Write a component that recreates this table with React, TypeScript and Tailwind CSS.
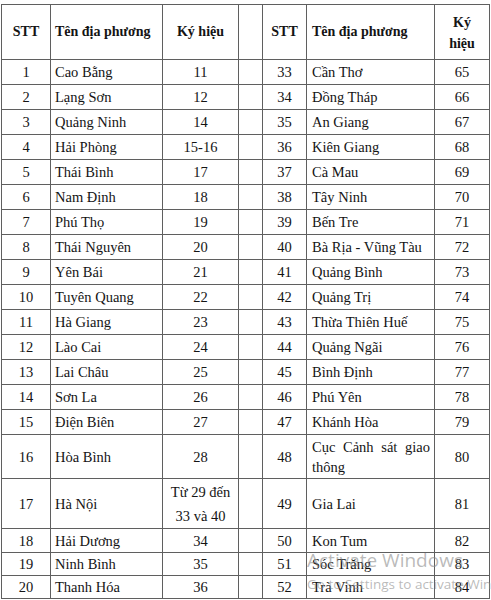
import React from 'react';

type Row = {
    a: [string, string, string];
    b: [string, string, string];
    h: string;
};

const rows: Row[] = [
    { a: ['1', 'Cao Bằng', '11'], b: ['33', 'Cần Thơ', '65'], h: 'h-[25px]' },
    { a: ['2', 'Lạng Sơn', '12'], b: ['34', 'Đồng Tháp', '66'], h: 'h-[25px]' },
    { a: ['3', 'Quảng Ninh', '14'], b: ['35', 'An Giang', '67'], h: 'h-[25px]' },
    { a: ['4', 'Hải Phòng', '15-16'], b: ['36', 'Kiên Giang', '68'], h: 'h-[25px]' },
    { a: ['5', 'Thái Bình', '17'], b: ['37', 'Cà Mau', '69'], h: 'h-[25px]' },
    { a: ['6', 'Nam Định', '18'], b: ['38', 'Tây Ninh', '70'], h: 'h-[25px]' },
    { a: ['7', 'Phú Thọ', '19'], b: ['39', 'Bến Tre', '71'], h: 'h-[25px]' },
    { a: ['8', 'Thái Nguyên', '20'], b: ['40', 'Bà Rịa - Vũng Tàu', '72'], h: 'h-[25px]' },
    { a: ['9', 'Yên Bái', '21'], b: ['41', 'Quảng Bình', '73'], h: 'h-[25px]' },
    { a: ['10', 'Tuyên Quang', '22'], b: ['42', 'Quảng Trị', '74'], h: 'h-[25px]' },
    { a: ['11', 'Hà Giang', '23'], b: ['43', 'Thừa Thiên Huế', '75'], h: 'h-[25px]' },
    { a: ['12', 'Lào Cai', '24'], b: ['44', 'Quảng Ngãi', '76'], h: 'h-[25px]' },
    { a: ['13', 'Lai Châu', '25'], b: ['45', 'Bình Định', '77'], h: 'h-[25px]' },
    { a: ['14', 'Sơn La', '26'], b: ['46', 'Phú Yên', '78'], h: 'h-[25px]' },
    { a: ['15', 'Điện Biên', '27'], b: ['47', 'Khánh Hòa', '79'], h: 'h-[25px]' },
];

const tail: Row[] = [
    { a: ['18', 'Hải Dương', '34'], b: ['50', 'Kon Tum', '82'], h: 'h-[24px]' },
    { a: ['19', 'Ninh Bình', '35'], b: ['51', 'Sóc Trăng', '83'], h: 'h-[23px]' },
    { a: ['20', 'Thanh Hóa', '36'], b: ['52', 'Trà Vinh', '84'], h: 'h-[23px]' },
];

const cell = 'border border-[#5f5f5f] p-0 align-middle leading-[20px]';

const BodyRow = ({ row }: { row: Row }) => (
    <tr className={row.h}>
        <td className={`${cell} text-center`}>{row.a[0]}</td>
        <td className={`${cell} pl-[4px] text-left`}>{row.a[1]}</td>
        <td className={`${cell} text-center`}>{row.a[2]}</td>
        <td className={cell}></td>
        <td className={`${cell} text-center`}>{row.b[0]}</td>
        <td className={`${cell} pl-[5px] text-left`}>{row.b[1]}</td>
        <td className={`${cell} text-center`}>{row.b[2]}</td>
    </tr>
);

export default function App() {
    return (
        <div className="relative w-[491px] h-[600px] overflow-hidden bg-white pt-[4px] pl-[1px] font-[family-name:'Liberation_Serif','Times_New_Roman',serif] text-[14.5px] text-[#141414]">
            <table className="table-fixed border-collapse w-[488px]">
                <colgroup>
                    <col className="w-[49px]" />
                    <col className="w-[112px]" />
                    <col className="w-[76px]" />
                    <col className="w-[24px]" />
                    <col className="w-[44px]" />
                    <col className="w-[128px]" />
                    <col className="w-[55px]" />
                </colgroup>
                <thead>
                    <tr className="h-[55px] font-bold text-[14px]">
                        <th className={`${cell} text-center`}>STT</th>
                        <th className={`${cell} pl-[4px] text-left`}>Tên địa phương</th>
                        <th className={`${cell} text-center`}>Ký hiệu</th>
                        <th className={cell}></th>
                        <th className={`${cell} text-center`}>STT</th>
                        <th className={`${cell} pl-[5px] text-left`}>Tên địa phương</th>
                        <th className={`${cell} text-center leading-[21px] pt-[2px]`}>
                            Ký
                            <br />
                            hiệu
                        </th>
                    </tr>
                </thead>
                <tbody>
                    {rows.map((r) => (
                        <BodyRow key={r.a[0]} row={r} />
                    ))}
                    <tr className="h-[44px]">
                        <td className={`${cell} text-center`}>16</td>
                        <td className={`${cell} pl-[4px] text-left`}>Hòa Bình</td>
                        <td className={`${cell} text-center`}>28</td>
                        <td className={cell}></td>
                        <td className={`${cell} text-center`}>48</td>
                        <td className={`${cell} pl-[5px] pr-[4px] text-justify`}>Cục Cảnh sát giao thông</td>
                        <td className={`${cell} text-center`}>80</td>
                    </tr>
                    <tr className="h-[50px]">
                        <td className={`${cell} text-center`}>17</td>
                        <td className={`${cell} pl-[4px] text-left`}>Hà Nội</td>
                        <td className={`${cell} text-center leading-[24px]`}>
                            Từ 29 đến
                            <br />
                            33 và 40
                        </td>
                        <td className={cell}></td>
                        <td className={`${cell} text-center`}>49</td>
                        <td className={`${cell} pl-[5px] text-left`}>Gia Lai</td>
                        <td className={`${cell} text-center`}>81</td>
                    </tr>
                    {tail.map((r) => (
                        <BodyRow key={r.a[0]} row={r} />
                    ))}
                </tbody>
            </table>

            {/* windows watermark */}
            <div className="absolute left-[307px] top-[547px] font-[family-name:'Open_Sans',sans-serif] text-[rgba(140,140,140,0.6)] whitespace-nowrap pointer-events-none">
                <div className="text-[19px] leading-[26px]">Activate Windows</div>
                <div className="mt-[2px] text-[13.5px] leading-[18px]">Go to Settings to activate Windows.</div>
            </div>
        </div>
    );
}
